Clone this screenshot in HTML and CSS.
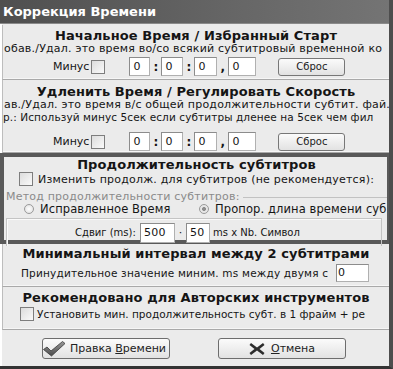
FILE: index.html
```html
<!doctype html>
<html lang="ru">

<head>
    <meta charset="UTF-8" />
    <title>Коррекция Времени</title>
    <link rel="stylesheet" href="styles.css">
</head>

<body>
    <div class="window">
        <header class="titlebar">Коррекция Времени</header>
        <div class="dialog">
            <section class="panel panel--start">
                <h2 class="panel__title">Начальное Время / Избранный Старт</h2>
                <p class="panel__text">обав./Удал. это время во/со всякий субтитровый временной ко</p>
                <div class="timerow">
                    <label class="minus">Минус<span class="check"></span></label>
                    <div class="time">
                        <span class="field field--h">0</span><b class="sep">:</b>
                        <span class="field field--m">0</span><b class="sep">:</b>
                        <span class="field field--s">0</span><b class="sep">,</b>
                        <span class="field field--ms">0</span>
                    </div>
                    <button class="btn btn--reset">Сброс</button>
                </div>
            </section>

            <section class="panel panel--speed">
                <h2 class="panel__title">Удленить Время / Регулировать Скорость</h2>
                <p class="panel__text">ав./Удал. это время в/с общей продолжительности субтит. фай.</p>
                <p class="panel__text panel__text--second">р.: Используй минус 5сек если субтитры дленее на 5сек чем фил</p>
                <div class="timerow timerow--low">
                    <label class="minus">Минус<span class="check"></span></label>
                    <div class="time">
                        <span class="field field--h">0</span><b class="sep">:</b>
                        <span class="field field--m">0</span><b class="sep">:</b>
                        <span class="field field--s">0</span><b class="sep">,</b>
                        <span class="field field--ms">0</span>
                    </div>
                    <button class="btn btn--reset">Сброс</button>
                </div>
            </section>

            <section class="duration">
                <h2 class="panel__title">Продолжительность субтитров</h2>
                <label class="option option--duration"><span class="check"></span>Изменить продолж. для субтитров (не рекомендуется):</label>
                <fieldset class="method">
                    <legend class="method__legend">Метод продолжительности субтитров:</legend>
                    <div class="method__row">
                        <label class="radio radio--first"><span class="radio__dot"></span>Исправленное Время</label>
                        <label class="radio"><span class="radio__dot radio__dot--on"></span>Пропор. длина времени суб</label>
                    </div>
                </fieldset>
                <div class="shift">
                    <span class="shift__label">Сдвиг (ms):</span>
                    <span class="field field--shift">500</span>
                    <span class="shift__plus">·</span>
                    <span class="field field--char">50</span>
                    <span class="shift__unit">ms x Nb. Символ</span>
                </div>
            </section>

            <section class="panel panel--gap">
                <h2 class="panel__title">Минимальный интервал между 2 субтитрами</h2>
                <div class="gaprow">
                    <span class="gaprow__text">Принудительное значение миним. ms между двумя с</span>
                    <span class="field field--gap">0</span>
                </div>
            </section>

            <section class="panel panel--tools">
                <h2 class="panel__title">Рекомендовано для Авторских инструментов</h2>
                <label class="option option--tools"><span class="check"></span>Установить мин. продолжительность субт. в 1 фрайм + ре</label>
            </section>

            <footer class="actions">
                <button class="btn btn--main btn--apply">
                    <svg class="btn__icon" width="24" height="17" viewBox="0 0 24 17">
                        <defs>
                            <linearGradient id="tick" x1="0" y1="0" x2="0" y2="1">
                                <stop offset="0" stop-color="#9a9a9a" />
                                <stop offset="1" stop-color="#4a4a4a" />
                            </linearGradient>
                        </defs>
                        <path d="M1.5 9.5 L5 7 L9 11 L20.5 1.5 L23 3.5 L9.5 16 Z" fill="url(#tick)" stroke="#3a3a3a" stroke-width="0.8" stroke-linejoin="round" />
                    </svg>
                    <span class="btn__label">Правка <u>В</u>ремени</span>
                </button>
                <button class="btn btn--main btn--cancel">
                    <svg class="btn__icon" width="16" height="14" viewBox="0 0 16 14">
                        <path d="M2 1 L8 5.5 L14 1 L15.5 3 L10.5 7 L15.5 11 L14 13 L8 8.5 L2 13 L0.5 11 L5.5 7 L0.5 3 Z" fill="#2c2c2c" />
                    </svg>
                    <span class="btn__label"><u>О</u>тмена</span>
                </button>
            </footer>
        </div>
    </div>
</body>

</html>
```

FILE: styles.css
```css
* {
    margin: 0;
    padding: 0;
    box-sizing: border-box;
}

body {
    margin: 0;
    background: #ebebeb;
    font-family: 'DejaVu Sans', 'Liberation Sans', sans-serif;
    font-size: 11px;
    letter-spacing: 0.2px;
    color: #151515;
}

.window {
    width: 393px;
    height: 369px;
    overflow: hidden;
    display: flex;
    flex-direction: column;
    border-right: 4px solid #4d4d4d;
    border-bottom: 3px solid #333;
}

.titlebar {
    height: 24px;
    line-height: 24px;
    padding-left: 3px;
    background: linear-gradient(to right, #4f4f4f, #666 60%, #747474);
    color: #fff;
    font-size: 13px;
    font-weight: bold;
    letter-spacing: 0;
    border-bottom: 1px solid #8a8a8a;
}

.dialog {
    flex: 1;
    display: flex;
    flex-direction: column;
    padding-top: 1px;
    border-left: 2px solid #fff;
}

.panel {
    border-left: 1px solid #bdbdbd;
    border-bottom: 1px solid #a9a9a9;
    box-shadow: inset 0 -1px 0 #f6f6f6;
}

.panel__title {
    font-size: 13px;
    font-weight: bold;
    line-height: 15px;
    text-align: center;
    white-space: nowrap;
    letter-spacing: 0.1px;
}

.panel__text {
    line-height: 12px;
    white-space: nowrap;
    overflow: hidden;
    padding-left: 1px;
}

.panel--start {
    height: 55px;
    padding-top: 3px;
}

.panel--speed {
    height: 73px;
    padding-top: 4px;
}

.panel__text--second {
    line-height: 13px;
    font-size: 10.5px;
    letter-spacing: 0.1px;
    padding-left: 0;
}

.timerow {
    display: flex;
    align-items: center;
    height: 19px;
    margin-top: 2px;
    padding-left: 50px;
}

.timerow--low {
    margin-top: 8px;
}

.minus {
    display: flex;
    align-items: center;
    gap: 2px;
    letter-spacing: 0;
}

.check {
    display: inline-block;
    flex: none;
    width: 14px;
    height: 14px;
    background: linear-gradient(135deg, #dcdcdc, #fafafa);
    border: 1px solid #7d7d7d;
}

.time {
    display: flex;
    align-items: center;
    margin-left: 24px;
}

.field {
    display: inline-block;
    flex: none;
    height: 19px;
    line-height: 17px;
    padding-left: 3px;
    background: #fff;
    border: 1px solid #b0b0b0;
    border-top-color: #8c8c8c;
    border-left-color: #8c8c8c;
    white-space: nowrap;
    overflow: hidden;
}

.field--h {
    width: 21px;
}

.field--m {
    width: 22px;
}

.field--s {
    width: 23px;
}

.field--ms {
    width: 28px;
}

.sep {
    width: 11px;
    text-align: center;
    font-size: 12px;
}

.btn {
    font-family: inherit;
    font-size: 11px;
    color: #222;
    background: linear-gradient(#fbfbfb, #e2e2e2);
    border: 1px solid #777;
    border-radius: 3px;
    cursor: pointer;
}

.btn--reset {
    width: 67px;
    height: 18px;
    margin-left: 22px;
    font-size: 10px;
}

.duration {
    height: 91px;
    border: 4px solid #595959;
    margin-left: -2px;
    margin-right: -2px;
    padding-left: 2px;
}

.option {
    display: flex;
    align-items: center;
    gap: 5px;
    height: 14px;
    white-space: nowrap;
}

.option--duration {
    padding-left: 13px;
}

.method {
    height: 26px;
    border: 0;
    border-top: 1px solid #c2c2c2;
    margin-top: 6px;
    padding: 0;
}

.method__legend {
    color: #8a8a8a;
    line-height: 10px;
    padding-right: 3px;
}

.method__row {
    display: flex;
    align-items: center;
    height: 14px;
}

.radio {
    display: flex;
    align-items: center;
    gap: 6px;
    white-space: nowrap;
    font-size: 11.5px;
    letter-spacing: 0.1px;
}

.radio--first {
    width: 193px;
    flex: none;
    padding-left: 18px;
}

.radio__dot {
    flex: none;
    width: 10px;
    height: 10px;
    border-radius: 50%;
    border: 1px solid #9a9a9a;
    background: radial-gradient(#fff, #dcdcdc);
}

.radio__dot--on {
    background: radial-gradient(#8d8d8d 30%, #e6e6e6 40%);
}

.shift {
    display: flex;
    align-items: center;
    height: 28px;
    margin-right: 5px;
    border: 1px solid #c4c4c4;
    border-bottom: 0;
    box-shadow: inset 1px 1px 0 #fafafa;
    padding-left: 68px;
}

.shift__label {
    font-size: 10px;
    width: 65px;
    letter-spacing: 0;
}

.field--shift {
    width: 35px;
    height: 20px;
}

.shift__plus {
    width: 11px;
    text-align: center;
}

.field--char {
    width: 24px;
    height: 20px;
}

.shift__unit {
    font-size: 10px;
    margin-left: 3px;
    letter-spacing: 0;
}

.panel--gap {
    height: 43px;
    padding-top: 2px;
}

.gaprow {
    display: flex;
    align-items: center;
    height: 18px;
    margin-top: 3px;
    padding-left: 18px;
}

.gaprow__text {
    width: 315px;
    flex: none;
    white-space: nowrap;
    overflow: hidden;
    font-size: 10.5px;
}

.field--gap {
    width: 33px;
    height: 18px;
    line-height: 16px;
    padding-left: 1px;
}

.panel--tools {
    height: 43px;
    padding-top: 3px;
}

.option--tools {
    margin-top: 2px;
    padding-left: 17px;
    gap: 3px;
    font-size: 10.5px;
    letter-spacing: 0;
}

.actions {
    display: flex;
    padding-top: 8px;
    padding-left: 40px;
    gap: 48px;
}

.btn--main {
    display: flex;
    align-items: center;
    justify-content: center;
    gap: 4px;
    width: 128px;
    height: 21px;
    font-size: 11px;
    border-color: #6d6d6d;
}

.btn__label {
    white-space: nowrap;
}

.btn--apply .btn__icon {
    margin-left: -4px;
}

.btn--cancel .btn__icon {
    margin-right: 2px;
}
```
